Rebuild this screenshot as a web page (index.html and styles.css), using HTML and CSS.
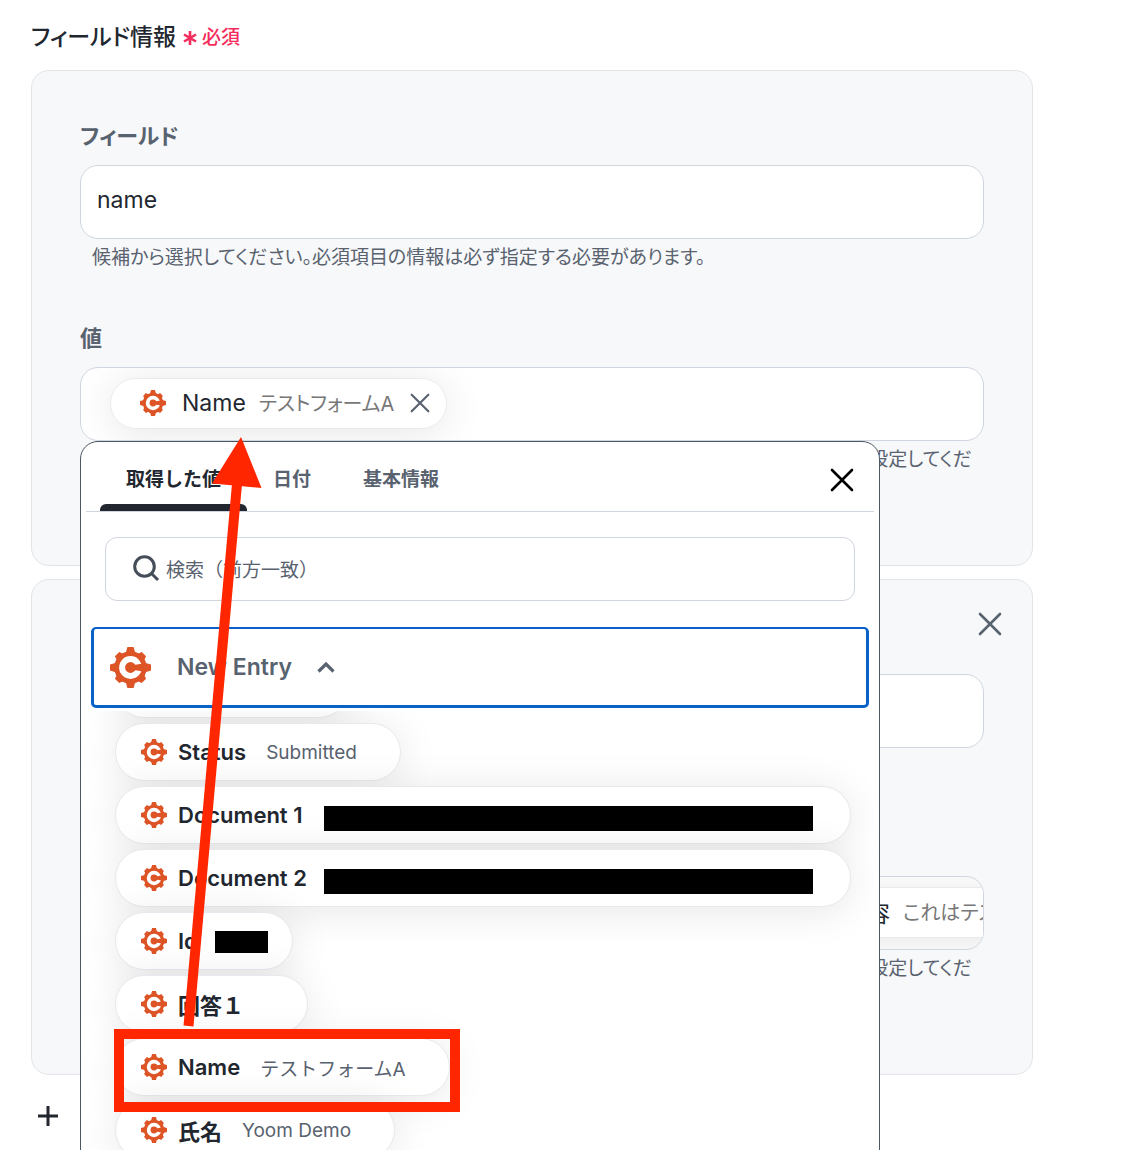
FILE: index.html
```html
<!DOCTYPE html>
<html lang="ja">
<head>
  <meta charset="UTF-8">
  <meta name="viewport" content="width=device-width, initial-scale=1.0">
  <title>フィールド情報</title>
  <link rel="stylesheet" href="styles.css">
</head>
<body>
  <!-- Shared icons -->
  <svg class="sprite" aria-hidden="true">
    <symbol id="gear" viewBox="0 0 40 40">
      <g fill="#dd5426">
        <circle cx="20" cy="20" r="15.800"/>
        <path d="M17 0h6l2 7h-10zM17 40h6l2-7h-10zM0 17v6l7 2v-10zM40 17v6l-7 2v-10z"/>
        <path transform="rotate(45 20 20)" d="M17 1.500h6l2 6h-10zM17 38.500h6l2-6h-10zM1.500 17v6l6 2v-10zM38.500 17v6l-6 2v-10z"/>
      </g>
      <circle cx="20" cy="20" r="8.200" fill="none" stroke="#fff" stroke-width="5.800"/>
      <path fill="#dd5426" d="M20 17.200h5l7-1v7.600l-7-1h-5z"/>
    </symbol>
    <symbol id="cross" viewBox="0 0 24 24">
      <path d="M2 2l20 20M22 2L2 22" fill="none" stroke="currentColor" stroke-width="2.600" stroke-linecap="round"/>
    </symbol>
  </svg>

  <div class="page">
    <h2 class="title">フィールド情報
      <span class="required">
        <svg width="16" height="16" viewBox="0 0 16 16"><path d="M8 1v14M2 4.500l12 7M14 4.500l-12 7" stroke="currentColor" stroke-width="2.600"/></svg>
        必須
      </span>
    </h2>

    <!-- First field -->
    <section class="panel">
      <div class="field">
        <label for="field1">フィールド</label>
        <input id="field1" class="box" type="text" value="name">
        <p class="help">候補から選択してください。必須項目の情報は必ず指定する必要があります。</p>
      </div>
      <div class="field">
        <span class="label">値</span>
        <div class="value-wrap">
          <div class="box value">
            <div class="chip">
              <svg class="gear"><use href="#gear"/></svg>
              <span class="chip-name">Name</span>
              <span class="chip-sub">テストフォームA</span>
              <button class="icon-btn" type="button" aria-label="削除"><svg width="20" height="20"><use href="#cross"/></svg></button>
            </div>
          </div>

          <!-- Value picker -->
          <div class="picker">
            <div class="tabs">
              <button class="tab active" type="button">取得した値</button>
              <button class="tab" type="button">日付</button>
              <button class="tab" type="button">基本情報</button>
              <button class="icon-btn close" type="button" aria-label="閉じる"><svg width="24" height="24"><use href="#cross"/></svg></button>
            </div>
            <div class="search">
              <svg width="28" height="28" viewBox="0 0 28 28" fill="none" stroke="#454d59" stroke-width="3"><circle cx="12.500" cy="11.500" r="9.800"/><path d="M19.500 18.500l6.500 6.500"/></svg>
              <input type="text" aria-label="検索" placeholder="検索（前方一致）">
            </div>
            <button class="group" type="button">
              <svg class="gear-lg"><use href="#gear"/></svg>
              <span>New Entry</span>
              <svg width="18" height="12" viewBox="0 0 18 12"><path d="M1.500 10.500L9 3l7.500 7.500" fill="none" stroke="currentColor" stroke-width="3.200"/></svg>
            </button>
            <div class="list">
              <div class="pill scrolled"></div>
              <button class="pill" type="button"><svg class="gear"><use href="#gear"/></svg><b>Status</b><span>Submitted</span></button>
              <button class="pill wide" type="button"><svg class="gear"><use href="#gear"/></svg><b>Document 1</b><i class="redact"></i></button>
              <button class="pill wide" type="button"><svg class="gear"><use href="#gear"/></svg><b>Document 2</b><i class="redact"></i></button>
              <button class="pill id" type="button"><svg class="gear"><use href="#gear"/></svg><b>Id</b><i class="redact"></i></button>
              <button class="pill" type="button"><svg class="gear"><use href="#gear"/></svg><b>回答１</b><span></span></button>
              <button class="pill" type="button"><svg class="gear"><use href="#gear"/></svg><b>Name</b><span>テストフォームA</span></button>
              <button class="pill" type="button"><svg class="gear"><use href="#gear"/></svg><b>氏名</b><span>Yoom Demo</span></button>
            </div>
          </div>
        </div>
        <p class="help right">設定してくだ</p>
      </div>
    </section>

    <!-- Second field -->
    <section class="panel">
      <button class="icon-btn remove" type="button" aria-label="削除"><svg width="24" height="24"><use href="#cross"/></svg></button>
      <div class="field">
        <label for="field2">フィールド</label>
        <input id="field2" class="box" type="text">
        <p class="help">候補から選択してください。</p>
      </div>
      <div class="field">
        <span class="label">値</span>
        <div class="box value">
          <div class="chip chip-long">
            <svg class="gear"><use href="#gear"/></svg>
            <span class="chip-name">内容</span>
            <span class="chip-sub">これはテスト</span>
          </div>
        </div>
        <p class="help right">設定してくだ</p>
      </div>
    </section>

    <button class="icon-btn add" type="button" aria-label="追加">
      <svg width="22" height="22" viewBox="0 0 22 22"><path d="M11 1v20M1 11h20" stroke="currentColor" stroke-width="3"/></svg>
    </button>

    <!-- Arrow and frame over the form -->
    <svg class="annotation" width="480" height="1150" viewBox="0 0 480 1150" aria-hidden="true">
      <rect x="119" y="1034" width="336" height="73" fill="none" stroke="#ff2600" stroke-width="10"/>
      <path d="M188.500 1026L237 484" stroke="#ff2600" stroke-width="10"/>
      <path d="M241 437l20.500 51-49.500-4.500z" fill="#ff2600"/>
    </svg>
  </div>
</body>
</html>
```
FILE: styles.css
```css
* {
  box-sizing: border-box;
}

body {
  margin: 0;
  background-color: #fff;
  color: #22272f;
  font-family: Inter, "Noto Sans CJK JP", sans-serif;
}

button, input {
  font-family: inherit;
  color: inherit;
}

button {
  background: none;
  border: none;
  padding: 0;
  cursor: pointer;
}

svg {
  display: block;
  flex: none;
}

.sprite {
  position: absolute;
  width: 0;
  height: 0;
}

.page {
  position: relative;
  height: 100vh;
  overflow: hidden;
  padding: 20px 103px 0 31px;
}

.title {
  display: flex;
  align-items: center;
  gap: 6px;
  margin: 0 0 16px;
  font-size: 23px;
  line-height: 34px;
  font-weight: 500;
  font-feature-settings: "palt";
}

.required {
  display: flex;
  align-items: center;
  gap: 4px;
  padding-top: 2px;
  color: #f42b5b;
  font-size: 19px;
  line-height: 32px;
}

.panel {
  position: relative;
  margin-bottom: 13px;
  padding: 48px 48px 86px;
  background-color: #f7f8fa;
  border: 1px solid #e2e4e7;
  border-radius: 18px;
}

.field + .field {
  margin-top: 44px;
}

.field label, .label {
  display: block;
  margin-bottom: 12px;
  color: #59626f;
  font-size: 22px;
  font-weight: 600;
  line-height: 34px;
  font-feature-settings: "palt";
}

.box {
  display: block;
  width: 100%;
  height: 74px;
  background-color: #fff;
  border: 1px solid #d0d6df;
  border-radius: 18px;
}

input.box {
  padding: 0 16px 5px;
  font-size: 23px;
}

.value {
  display: flex;
  align-items: flex-start;
  padding: 10px 0 0 29px;
  overflow: hidden;
}

.help {
  margin: 0;
  padding: 0 12px;
  color: #59626f;
  font-size: 19px;
  line-height: 38px;
  font-feature-settings: "palt";
}

.right {
  text-align: right;
}

.chip {
  display: flex;
  flex: none;
  align-items: center;
  height: 51px;
  padding: 0 16px 2px 29px;
  background-color: #fff;
  border: 1px solid #ebebed;
  border-radius: 26px;
  box-shadow: 0 4px 40px rgba(0, 0, 0, 0.1);
}

.chip-name {
  margin: 0 13px 0 16px;
  font-size: 23px;
}

.chip-sub {
  margin-right: 16px;
  color: #777;
  font-size: 20px;
  font-feature-settings: "palt";
}

.chip-long .chip-name {
  min-width: 708px;
  text-align: right;
}

.icon-btn {
  color: #59626f;
}

.gear {
  width: 26px;
  height: 26px;
}

.gear-lg {
  width: 41px;
  height: 41px;
}

.remove {
  position: absolute;
  top: 32px;
  right: 30px;
}

.add {
  margin: 17px 0 0 6px;
  color: #22272f;
}

/* Picker */
.value-wrap {
  position: relative;
}

.picker {
  position: absolute;
  z-index: 2;
  top: 100%;
  left: 0;
  right: 104px;
  height: 760px;
  overflow: hidden;
  background-color: #fff;
  border: 1px solid #4d5663;
  border-radius: 18px;
}

.tabs {
  display: flex;
  height: 70px;
  margin: 0 5px;
  padding: 0 20px 0 14px;
  border-bottom: 1px solid #d0d6df;
}

.tab {
  padding: 0 26px 2px;
  color: #59626f;
  font-size: 19px;
  font-weight: 600;
  border-top: 4px solid transparent;
}

.tab.active {
  position: relative;
  color: #22272f;
}

.tab.active::after {
  content: "";
  position: absolute;
  left: 0;
  right: 0;
  bottom: 0;
  height: 7px;
  background-color: #22272f;
  border-radius: 6px 6px 0 0;
}

.close {
  margin: 6px 0 0 auto;
  color: #000;
}

.search {
  display: flex;
  align-items: center;
  gap: 6px;
  height: 64px;
  margin: 25px 24px 26px;
  padding: 0 26px;
  border: 1px solid #d0d6df;
  border-radius: 12px;
}

.search input {
  flex: 1;
  padding: 2px 0 0;
  border: none;
  outline: none;
  font-size: 19px;
}

.search input::placeholder {
  color: #59626f;
  opacity: 1;
}

.group {
  display: flex;
  align-items: center;
  width: calc(100% - 20px);
  height: 81px;
  margin: 0 10px;
  padding: 0 16px;
  border: 3px solid #0a62c9;
  border-top-width: 2px;
  border-radius: 5px;
  color: #59626f;
  font-size: 23px;
  font-weight: 600;
}

.group span {
  margin: 0 25px 0 26px;
}

.list {
  display: flex;
  flex-direction: column;
  align-items: flex-start;
  gap: 5px;
  padding: 0 28px 0 34px;
  margin-top: 3px;
  overflow: hidden;
}

.pill {
  display: flex;
  align-items: center;
  flex: none;
  height: 58px;
  padding: 0 43px 0 25px;
  background-color: #fff;
  border: 1px solid #e8e8ee;
  border-radius: 29px;
  box-shadow: 0 4px 40px rgba(0, 0, 0, 0.1);
}

.pill.scrolled {
  width: 233px;
  margin-top: -51px;
}

.pill b {
  margin: 0 20px 0 11px;
  font-size: 22px;
  font-weight: 600;
}

.pill span {
  color: #59626f;
  font-size: 19px;
}

.pill.wide {
  align-self: stretch;
  padding-right: 37px;
}

.redact {
  width: 489px;
  height: 25px;
  margin: 6px 0 0 auto;
  background-color: #000;
}

.pill.wide b {
  margin-right: 0;
}

.pill.id {
  padding-right: 24px;
}

.pill.id b {
  margin-right: 17px;
}

.id .redact {
  width: 53px;
  height: 22px;
  margin-top: 2px;
}

.annotation {
  position: absolute;
  z-index: 3;
  top: 0;
  left: 0;
  pointer-events: none;
}
```
